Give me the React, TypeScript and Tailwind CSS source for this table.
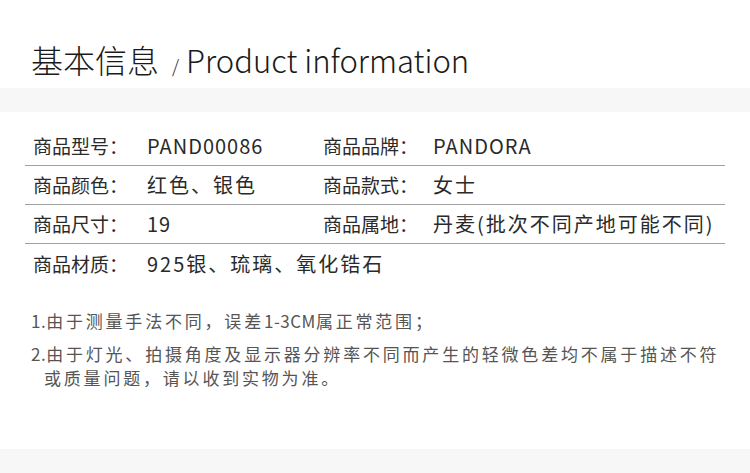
const FONT = "font-['Noto_Sans_CJK_SC','Noto_Sans',sans-serif]"

type Cell = { label: string; value: string; latin?: boolean }

const ROWS: Cell[][] = [
  [
    { label: '商品型号：', value: 'PAND00086', latin: true },
    { label: '商品品牌：', value: 'PANDORA', latin: true },
  ],
  [
    { label: '商品颜色：', value: '红色、银色' },
    { label: '商品款式：', value: '女士' },
  ],
  [
    { label: '商品尺寸：', value: '19', latin: true },
    { label: '商品属地：', value: '丹麦(批次不同产地可能不同)' },
  ],
  [{ label: '商品材质：', value: '925银、琉璃、氧化锆石' }],
]

export default function App() {
  return (
    <div className={`w-[750px] h-[473px] bg-white overflow-hidden flex flex-col ${FONT}`}>
      {/* header */}
      <div className="h-[88px] pt-[39px] pl-[31px] flex items-baseline text-[#1a1a1a]">
        <span className="text-[32px] leading-[40px] font-light">基本信息</span>
        <span className="text-[18px] font-light ml-[13px] mr-[7px]">/</span>
        <span className="text-[31px] leading-[40px] font-light">Product information</span>
      </div>
      <div className="h-[24px] bg-[#f7f7f7]" />

      {/* spec table */}
      <div className="mx-[25px] pt-[15px]">
        {ROWS.map((row, i) => (
          <div
            key={i}
            className={`h-[39px] grid grid-cols-[298px_1fr] items-center text-[#2a2a2a] ${
              i < ROWS.length - 1 ? 'border-b border-[#a0a0a0]' : ''
            }`}
          >
            {row.map((c, j) => (
              <div key={j} className={`flex items-baseline whitespace-nowrap ${j === 0 ? 'pl-[8px]' : ''}`}>
                <span className={`text-[19px] shrink-0 ${j === 0 ? 'w-[114px]' : 'w-[110px]'}`}>
                  {c.label}
                </span>
                <span className={`text-[20px] ${c.latin ? 'tracking-[1px]' : 'tracking-[2px]'}`}>
                  {c.value}
                </span>
              </div>
            ))}
          </div>
        ))}
      </div>

      {/* notes */}
      <div className="mt-[26px] pl-[31px] text-[17px] leading-[24px] tracking-[2.8px] text-[#555] whitespace-nowrap">
        <p>
          <span className="tracking-[0.5px]">1.</span>由于测量手法不同，误差
          <span className="tracking-[0.5px]">1-3CM</span>属正常范围；
        </p>
        <p className="mt-[9px] pl-[13px] -indent-[13px]">
          <span className="tracking-[0.5px]">2.</span>由于灯光、拍摄角度及显示器分辨率不同而产生的轻微色差均不属于描述不符
          <br />
          或质量问题，请以收到实物为准。
        </p>
      </div>

      <div className="mt-auto h-[24px] bg-[#f7f7f7]" />
    </div>
  )
}
